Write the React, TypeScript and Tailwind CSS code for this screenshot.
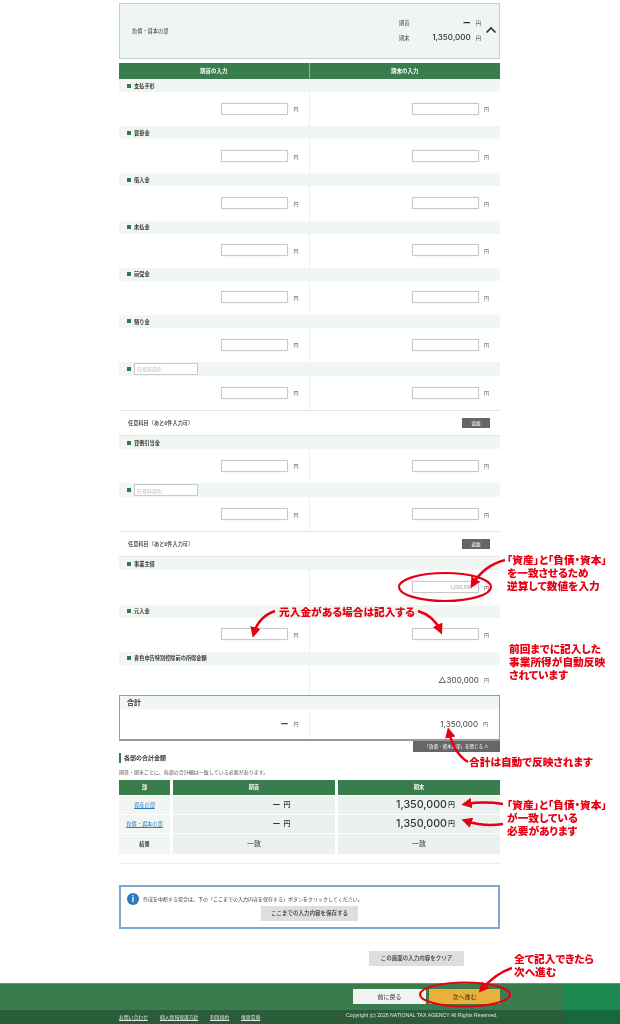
const jp = { fontFamily: '"Noto Sans CJK JP", "Noto Sans", sans-serif' };

function Yen() {
  return <span className="text-[5px] text-[#555]">円</span>;
}

function Cell({ children, border }: { children?: React.ReactNode; border?: boolean }) {
  return (
    <div className={`w-1/2 h-full flex items-center justify-end gap-[5px] ${border ? "pr-[10px] border-r border-[#eeeeee]" : "pr-[11px]"}`}>
      {children}
      {children ? <Yen /> : null}
    </div>
  );
}

function Input({ value }: { value?: string }) {
  return (
    <div className="w-[67px] h-[12px] bg-white border border-[#c9c9c9] rounded-[1px] flex items-center justify-end pr-[6px] text-[5px] text-[#999] shadow-[0_0_1px_#bbb] -mt-px">
      {value}
    </div>
  );
}

function Band({ label, h = "h-[13px]" }: { label: React.ReactNode; h?: string }) {
  return (
    <div className={`${h} bg-[#f0f6f2] flex items-center pl-[8px] gap-[3px] text-[5.2px] font-bold text-[#333]`}>
      <span className="w-[4px] h-[4px] bg-[#2f7a45]" />
      {label}
    </div>
  );
}

function InputRow({ label, right, noLeft }: { label: string; right?: string; noLeft?: boolean }) {
  return (
    <div>
      <Band label={label} />
      <div className="h-[34.2px] flex items-center">
        <Cell border>{noLeft ? null : <Input />}</Cell>
        <Cell><Input value={right} /></Cell>
      </div>
    </div>
  );
}

function CustomRow() {
  return (
    <div>
      <Band
        h="h-[14px]"
        label={
          <span className="w-[64px] h-[12px] bg-white border border-[#c9c9c9] flex items-center pl-[2px] text-[5px] font-normal text-[#bbb]">
            任意科目名
          </span>
        }
      />
      <div className="h-[34px] flex items-center">
        <Cell border><Input /></Cell>
        <Cell><Input /></Cell>
      </div>
    </div>
  );
}

function AddRow() {
  return (
    <div className="h-[26px] border-t border-b border-[#e6e6e6] flex items-center justify-between pl-[9px] pr-[10px] text-[5.2px] font-medium text-[#333]">
      <span>任意科目（あと6件入力可）</span>
      <span className="w-[28px] h-[10px] bg-[#666] text-white flex items-center justify-center text-[4.5px]">追加</span>
    </div>
  );
}

function SumRow({ name, link, left, right, h }: { name: string; link?: boolean; left: React.ReactNode; right: React.ReactNode; h: string }) {
  return (
    <div className={`flex gap-[3px] ${h} mb-px`}>
      <div className={`w-[51px] bg-[#f2f6f3] flex items-center justify-center text-[5.2px] ${link ? "text-[#2b7bbd] underline" : "text-[#333] font-bold"}`}>{name}</div>
      <div className="w-[162px] bg-[#ebf1ee] flex items-center justify-center text-[#333]">{left}</div>
      <div className="w-[162px] bg-[#ebf1ee] flex items-center justify-center text-[#333]">{right}</div>
    </div>
  );
}

function Note({ className, lines }: { className: string; lines: string[] }) {
  return (
    <div className={`absolute text-[10.7px] leading-[13px] font-black text-[#e60012] whitespace-nowrap [font-feature-settings:'palt'] ${className}`}>
      {lines.map((l) => <div key={l}>{l}</div>)}
    </div>
  );
}

function Overlay() {
  const c = "#e60012";
  const arrows = [
    "M505 560 C490 564 480 572 473 584",
    "M275 611 C264 615 257 622 254 633",
    "M418 611 C428 614 436 621 440 630",
    "M468 762 C458 756 452 745 449 732",
    "M503 804 C490 802 478 802 466 804",
    "M503 824 C490 826 478 825 466 821",
    "M512 968 C500 972 490 980 482 989",
  ];
  return (
    <svg className="absolute left-0 top-0 pointer-events-none" width="620" height="1024" viewBox="0 0 620 1024" fill="none">
      <defs>
        <marker id="ah" markerWidth="4.4" markerHeight="4.4" refX="2.4" refY="2.2" orient="auto">
          <path d="M0 0 L4.4 2.2 L0 4.4 Z" fill={c} />
        </marker>
      </defs>
      <ellipse cx="445" cy="587" rx="46" ry="14" stroke={c} strokeWidth="2.2" />
      <ellipse cx="465" cy="994.5" rx="45" ry="12" stroke={c} strokeWidth="2.2" />
      {arrows.map((d) => <path key={d} d={d} stroke={c} strokeWidth="2.4" markerEnd="url(#ah)" />)}
    </svg>
  );
}

const num = { fontFamily: 'Inter, "Noto Sans", sans-serif' };

export default function App() {
  return (
    <div className="relative w-[620px] h-[1024px] bg-white overflow-hidden flex flex-col blur-[0.45px]" style={jp}>
      <main className="ml-[119px] w-[381px] pt-[3px]">
        <div className="h-[56px] bg-[#eff5f1] border border-[#b9d6c2] flex items-center pl-[12px] pr-[1px] text-[5.2px] text-[#333]">
          <span className="flex-1">負債・資本の部</span>
          <div className="w-[82px] flex flex-col gap-[3px] -mt-[2px]">
            <div className="flex items-center justify-between h-[12px]"><span>期首</span><span className="flex items-center gap-[5px]"><b className="text-[8px]">ー</b>円</span></div>
            <div className="flex items-center justify-between h-[12px]"><span>期末</span><span className="flex items-center gap-[5px]"><span className="text-[8.1px] font-medium" style={num}>1,350,000</span>円</span></div>
          </div>
          <svg width="12" height="8" viewBox="0 0 12 8" className="ml-[4px] mr-[1px] -mt-[3px]" fill="none"><path d="M1.5 6.5 L6 2 L10.5 6.5" stroke="#333" strokeWidth="1.7" /></svg>
        </div>

        <div className="mt-[4px] h-[16px] bg-[#3a7d4c] flex text-white text-[5.5px] font-bold">
          <div className="w-1/2 flex items-center justify-center border-r border-[#8db79a]">期首の入力</div>
          <div className="w-1/2 flex items-center justify-center">期末の入力</div>
        </div>

        <InputRow label="支払手形" />
        <InputRow label="買掛金" />
        <InputRow label="借入金" />
        <InputRow label="未払金" />
        <InputRow label="前受金" />
        <InputRow label="預り金" />
        <CustomRow />
        <AddRow />
        <InputRow label="貸倒引当金" />
        <CustomRow />
        <AddRow />
        <InputRow label="事業主借" right="1,850,000" noLeft />
        <InputRow label="元入金" />

        <Band label="青色申告特別控除前の所得金額" />
        <div className="h-[30px] flex items-center">
          <div className="w-1/2 h-full border-r border-[#eeeeee]" />
          <Cell><span className="text-[8.1px] text-[#444]" style={num}>△300,000</span></Cell>
        </div>

        <div className="h-[46px] border-[1.5px] border-[#999] border-b-2 flex flex-col">
          <div className="h-[13px] bg-[#f0f6f2] flex items-center pl-[7px] text-[7px] font-bold text-[#333]">合計</div>
          <div className="flex-1 flex items-center">
            <Cell border><b className="text-[8px] text-[#444]">ー</b></Cell>
            <Cell><span className="text-[8.1px] text-[#444]" style={num}>1,350,000</span></Cell>
          </div>
        </div>

        <div className="flex justify-end">
          <div className="w-[87px] h-[11px] bg-[#666] text-white text-[4.5px] flex items-center justify-center">「負債・資本の部」を閉じる ∧</div>
        </div>

        <div className="mt-[1px] h-[10px] border-l-2 border-[#3a7d4c] pl-[3px] flex items-center text-[6px] font-bold text-[#333]">各部の合計金額</div>
        <p className="mt-[4px] h-[10px] flex items-center text-[5px] text-[#555]">期首・期末ごとに、各部の合計欄は一致している必要があります。</p>

        <div className="mt-[3px] flex gap-[3px] h-[15px] mb-px text-white text-[5.2px] font-bold">
          <div className="w-[51px] bg-[#3a7d4c] flex items-center justify-center">部</div>
          <div className="w-[162px] bg-[#3a7d4c] flex items-center justify-center">期首</div>
          <div className="w-[162px] bg-[#3a7d4c] flex items-center justify-center">期末</div>
        </div>
        <SumRow h="h-[18px]" link name="資産の部" left={<span className="flex items-center gap-[3px] text-[8px] font-medium ml-[55px]">ー<span className="text-[7px]">円</span></span>} right={<span className="flex items-center gap-[1px] text-[10.7px] font-medium ml-[13px]" style={num}>1,350,000<span className="text-[7px]" style={jp}>円</span></span>} />
        <SumRow h="h-[18px]" link name="負債・資本の部" left={<span className="flex items-center gap-[3px] text-[8px] font-medium ml-[55px]">ー<span className="text-[7px]">円</span></span>} right={<span className="flex items-center gap-[1px] text-[10.7px] font-medium ml-[13px]" style={num}>1,350,000<span className="text-[7px]" style={jp}>円</span></span>} />
        <SumRow h="h-[20px]" name="結果" left={<span className="text-[7px]">一致</span>} right={<span className="text-[7px]">一致</span>} />

        <div className="mt-[9px] h-px bg-[#eeeeee]" />

        <div className="mt-[21px] h-[44px] border-2 border-[#7aa9d6] flex flex-col items-center pt-[7px] relative">
          <div className="absolute left-[6px] top-[6px] w-[12px] h-[12px] rounded-full bg-[#2b7bbd] text-white text-[8px] font-bold flex items-center justify-center">i</div>
          <p className="self-start ml-[22px] h-[10px] flex items-center text-[5px] text-[#444]">作成を中断する場合は、下の「ここまでの入力内容を保存する」ボタンをクリックしてください。</p>
          <div className="mt-[2px] w-[97px] h-[15px] bg-[#dedede] text-[5.5px] font-medium text-[#333] flex items-center justify-center">ここまでの入力内容を保存する</div>
        </div>

        <div className="mt-[22px] ml-[250px] w-[95px] h-[15px] bg-[#dedede] text-[5.5px] font-medium text-[#333] flex items-center justify-center">この画面の入力内容をクリア</div>
      </main>

      <footer className="mt-auto h-[41px] flex flex-col">
        <div className="h-[27px] bg-[linear-gradient(to_right,#3a7d4c_563px,#1c8a50_563px)] border-t border-[#5e9870] flex items-center pl-[353px] pb-[2px] gap-[3px] text-[6px] text-[#333]">
          <div className="w-[73px] h-[15px] bg-[#f2f2f2] flex items-center justify-center">前に戻る</div>
          <div className="w-[71px] h-[15px] bg-[#e9b03c] flex items-center justify-center">次へ進む</div>
        </div>
        <div className="flex-1 bg-[linear-gradient(to_right,#2b5c39_563px,#17683d_563px)] flex items-center pl-[119px] text-[4.8px] text-[#dfe9e2]">
          <span className="underline w-[41px]">お問い合わせ</span>
          <span className="underline w-[50px]">個人情報保護方針</span>
          <span className="underline w-[31px]">利用規約</span>
          <span className="underline w-[105px]">推奨環境</span>
          <span className="-mt-[3px] text-[5.2px]" style={{ fontFamily: '"Liberation Sans", sans-serif' }}>Copyright (c) 2026 NATIONAL TAX AGENCY All Rights Reserved.</span>
        </div>
      </footer>

      <Overlay />
      <Note className="left-[507px] top-[553px]" lines={["「資産」と「負債・資本」", "を一致させるため", "逆算して数値を入力"]} />
      <Note className="left-[279px] top-[605px]" lines={["元入金がある場合は記入する"]} />
      <Note className="left-[509px] top-[642px]" lines={["前回までに記入した", "事業所得が自動反映", "されています"]} />
      <Note className="left-[469px] top-[755px]" lines={["合計は自動で反映されます"]} />
      <Note className="left-[507px] top-[798px]" lines={["「資産」と「負債・資本」", "が一致している", "必要があります"]} />
      <Note className="left-[514px] top-[952px]" lines={["全て記入できたら", "次へ進む"]} />
    </div>
  );
}
